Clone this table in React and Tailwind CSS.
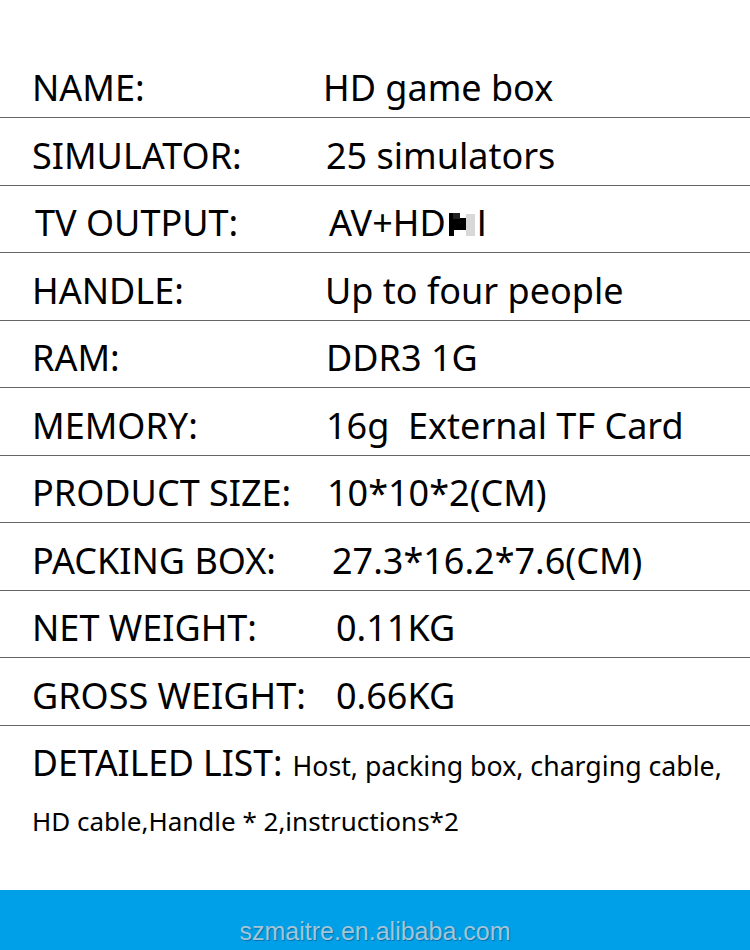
import React from "react";

function GlitchM() {
  return (
    <span className="relative inline-block w-[31px] h-[25px]">
      <span className="absolute left-[3px] top-[2px] w-[5px] h-[23px] bg-black" />
      <span className="absolute left-[7px] top-[7px] w-[13px] h-[12px] bg-black" />
      <span className="absolute left-[7px] top-[2px] w-[7px] h-[6px] bg-[#222]" />
      <span className="absolute left-[20px] top-[3px] w-[9px] h-[22px] bg-[#d8d8d8]" />
    </span>
  );
}

const rows = [
  { label: "NAME:", value: "HD game box", lx: "pl-[32px]", vx: "pl-0" },
  { label: "SIMULATOR:", value: "25 simulators", lx: "pl-[32px]", vx: "pl-[3px]" },
  {
    label: "TV OUTPUT:",
    value: (
      <>
        AV+HD<GlitchM />
        <span className="font-['Liberation_Sans',sans-serif]">I</span>
      </>
    ),
    lx: "pl-[35px]",
    vx: "pl-[6px]",
  },
  { label: "HANDLE:", value: "Up to four people", lx: "pl-[32px]", vx: "pl-[2px]" },
  { label: "RAM:", value: "DDR3 1G", lx: "pl-[32px]", vx: "pl-[3px]" },
  { label: "MEMORY:", value: "16g  External TF Card", lx: "pl-[32px]", vx: "pl-[3px]" },
  { label: "PRODUCT SIZE:", value: "10*10*2(CM)", lx: "pl-[32px]", vx: "pl-[4px]" },
  { label: "PACKING BOX:", value: "27.3*16.2*7.6(CM)", lx: "pl-[32px]", vx: "pl-[9px]" },
  { label: "NET WEIGHT:", value: "0.11KG", lx: "pl-[32px]", vx: "pl-[13px]" },
  { label: "GROSS WEIGHT:", value: "0.66KG", lx: "pl-[32px]", vx: "pl-[13px]" },
];

export default function App() {
  return (
    <div className="w-[750px] h-[950px] bg-white flex flex-col font-['Noto_Sans',sans-serif] text-black overflow-hidden">
      <div className="pt-[50.5px]">
        {rows.map((r) => (
          <div
            key={r.label}
            className="h-[67.5px] border-b border-[#666] flex items-center pt-[9px] text-[36px] leading-none"
          >
            <div className={`w-[323px] shrink-0 whitespace-pre ${r.lx}`}>{r.label}</div>
            <div className={`whitespace-pre ${r.vx}`}>{r.value}</div>
          </div>
        ))}
      </div>
      <div className="pl-[32px] pt-[19px]">
        <div className="flex items-baseline whitespace-pre">
          <span className="text-[35.5px] leading-none">DETAILED LIST:</span>
          <span className="text-[26.7px] leading-none ml-[10px]">Host, packing box, charging cable,</span>
        </div>
        <div className="text-[26px] leading-none mt-[28px] whitespace-pre">HD cable,Handle * 2,instructions*2</div>
      </div>
      <div className="flex-1" />
      <div className="h-[60px] bg-[#00a0e8] flex items-end justify-center pb-[6px]">
        <span className="font-['Liberation_Sans',sans-serif] text-[25px] leading-none text-[#a4c4d8] [text-shadow:1px_1px_1px_rgba(0,60,100,0.45)]">
          szmaitre.en.alibaba.com
        </span>
      </div>
    </div>
  );
}
